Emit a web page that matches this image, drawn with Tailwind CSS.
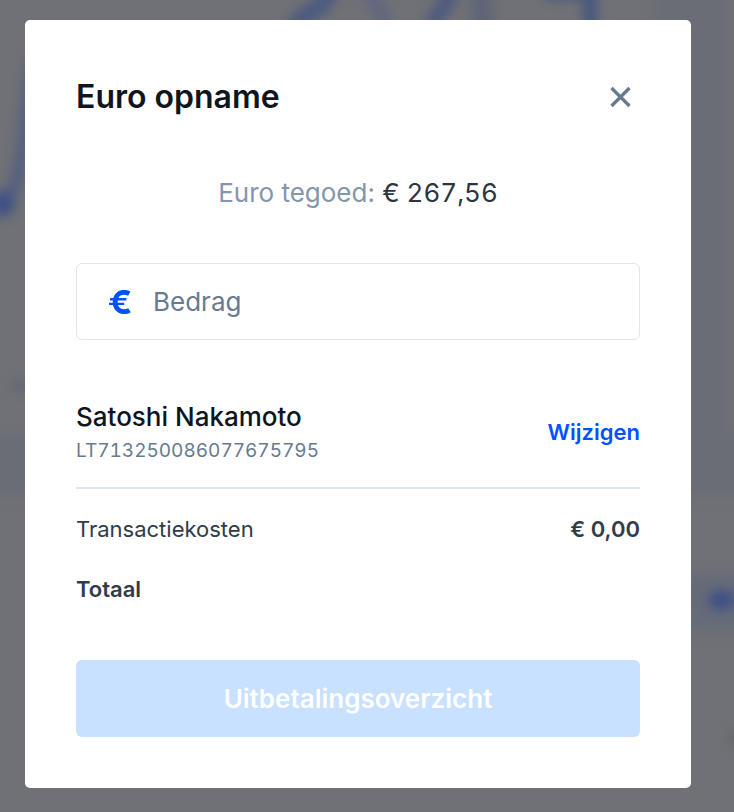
<!DOCTYPE html>
<html lang="nl">
<head>
  <meta charset="UTF-8" />
  <meta name="viewport" content="width=device-width, initial-scale=1.0"/>
  <title>Euro opname</title>
  <script src="https://cdn.jsdelivr.net/npm/@tailwindcss/browser@4"></script>
</head>
<body class="relative min-h-screen overflow-x-hidden bg-[#707176] pt-5 pr-[43px] pb-6 pl-[25px] font-['Inter',sans-serif]">

  <!-- Blurred dashboard behind the dialog -->
  <svg class="absolute inset-0 h-full w-full" viewBox="0 0 734 812" preserveAspectRatio="none" aria-hidden="true">
    <defs>
      <filter id="soft" x="-50%" y="-50%" width="200%" height="200%" color-interpolation-filters="sRGB"><feGaussianBlur stdDeviation="6" /></filter>
      <filter id="edge" x="-20%" y="-20%" width="140%" height="140%" color-interpolation-filters="sRGB"><feGaussianBlur stdDeviation="7" /></filter>
    </defs>
    <g filter="url(#edge)" fill="#6a6d76">
      <rect x="-40" y="435" width="820" height="60" />
      <rect x="655" y="-40" width="71" height="500" />
      <rect x="680" y="574" width="90" height="56" fill="#656b79" />
    </g>
    <g filter="url(#soft)" fill="none" stroke="#4c5a80" stroke-width="13">
      <path d="M-10 206 C14 206 22 176 26 120 L34 60" stroke="#535f80" />
      <path d="M286 44 C300 6 318 20 332 -12" stroke-width="18" />
      <path d="M364 -12 C376 0 382 16 390 34" stroke="#5d6580" />
      <path d="M426 44 C436 8 446 12 452 -12" stroke-width="16" />
      <path d="M482 -12 V34" stroke="#5d6579" stroke-width="20" />
      <path d="M544 -8 H590 V34" stroke="#44547f" />
      <circle cx="2" cy="204" r="6" fill="#3d4f86" stroke="#3d4f86" />
      <ellipse cx="722" cy="600" rx="7" ry="3" fill="#3d4f86" stroke="#3d4f86" />
      <path d="M12 386 H34" stroke="#5e6570" stroke-width="9" />
      <path d="M732 738 H744" stroke="#5e5f64" />
    </g>
  </svg>

  <main role="dialog" aria-labelledby="title" class="relative rounded-[5px] bg-white px-[51px] pt-[53px] pb-[51px]">
    <header class="flex h-12 items-center justify-between">
      <h1 id="title" class="text-[32px] font-semibold text-[#0f151c]">Euro opname</h1>
      <button type="button" aria-label="Sluiten" class="flex size-10 items-center justify-center text-[#677b8f]">
        <svg class="size-6" viewBox="0 0 24 24" fill="none" stroke="currentColor" stroke-width="3.300">
          <path d="M3.500 3 21.500 21M21.500 3 3.500 21" />
        </svg>
      </button>
    </header>

    <p class="mt-13 text-center text-[26px] leading-10 text-[#8496a9]">Euro tegoed: <span class="text-[#2b3640] tabular-nums">€ 267,56</span></p>

    <form>
      <label for="amount" class="mt-[50px] flex h-[77px] items-center rounded-md border border-[#dfe6ee] pr-6 pl-8">
        <svg class="h-6 w-[22px] shrink-0" viewBox="0 0 22 24" fill="none" stroke="#0052ff" aria-hidden="true">
          <path d="M20.300 3.600C18.500 2.600 17 2.300 15 2.300C9.500 2.300 6.200 6.300 6.200 12S9.500 21.700 15 21.700C17 21.700 18.700 21.300 20.500 20.200" stroke-width="4.800" />
          <path d="M1 9.200H17.400M0 13.900H15.200" stroke-width="2.400" />
        </svg>
        <input id="amount" type="text" inputmode="decimal" aria-label="Bedrag" placeholder="Bedrag" class="ml-[22px] h-12 w-full min-w-0 text-[26px] leading-10 text-[#2b3640] outline-none placeholder:text-[#677b8f]">
      </label>

      <!-- Bank account -->
      <section class="mt-[59px] flex items-center justify-between border-b-2 border-[#dfe6ee] pb-[22px]">
        <div>
          <h2 class="text-[26px] leading-9 font-medium text-[#0f151c]">Satoshi Nakamoto</h2>
          <p class="mt-0.5 text-[19px] leading-7 text-[#677b8f] tabular-nums">LT713250086077675795</p>
        </div>
        <button type="button" class="text-[22px] font-semibold text-[#0052ff]">Wijzigen</button>
      </section>

      <!-- Costs -->
      <dl class="mt-6 space-y-7 text-[22px] leading-8 text-[#2f3c49]">
        <div class="flex justify-between">
          <dt>Transactiekosten</dt>
          <dd class="font-semibold">€ 0,00</dd>
        </div>
        <div class="flex justify-between">
          <dt class="font-semibold">Totaal</dt>
          <dd></dd>
        </div>
      </dl>

      <button type="submit" disabled class="mt-[55px] h-[77px] w-full rounded-md bg-[#c8e1ff] text-[26px] font-semibold text-white">Uitbetalingsoverzicht</button>
    </form>
  </main>
</body>
</html>
